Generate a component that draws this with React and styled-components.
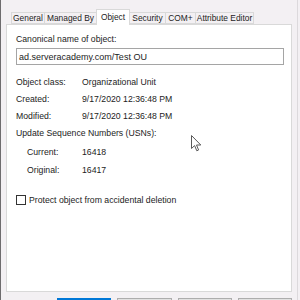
import * as React from "react";
import styled, { createGlobalStyle } from "styled-components";

const GlobalStyle = createGlobalStyle`
  html, body {
    margin: 0;
    padding: 0;
    width: 300px;
    height: 300px;
    overflow: hidden;
    background: #f3f0f3;
  }
  * { box-sizing: border-box; }
`;

const tabs = [
  { label: "General", width: 34 },
  { label: "Managed By", width: 53 },
  { label: "Object", width: 34, active: true },
  { label: "Security", width: 37 },
  { label: "COM+", width: 31 },
  { label: "Attribute Editor", width: 59 },
];

const rows = [
  { label: "Object class:", value: "Organizational Unit" },
  { label: "Created:", value: "9/17/2020 12:36:48 PM" },
  { label: "Modified:", value: "9/17/2020 12:36:48 PM" },
];

const usns = [
  { label: "Current:", value: "16418" },
  { label: "Original:", value: "16417" },
];

export default function App() {
  return (
    <>
      <GlobalStyle />
      <Window>
        <TabStrip>
          {tabs.map((t) => (
            <Tab key={t.label} $width={t.width} $active={t.active}>
              {t.label}
            </Tab>
          ))}
        </TabStrip>
        <Panel>
          <Label>Canonical name of object:</Label>
          <TextBox>ad.serveracademy.com/Test OU</TextBox>
          <Fields>
            {rows.map((r) => (
              <React.Fragment key={r.label}>
                <FieldLabel>{r.label}</FieldLabel>
                <FieldValue>{r.value}</FieldValue>
              </React.Fragment>
            ))}
            <Heading>Update Sequence Numbers (USNs):</Heading>
            {usns.map((r) => (
              <React.Fragment key={r.label}>
                <FieldLabel $indent>{r.label}</FieldLabel>
                <FieldValue $indent>{r.value}</FieldValue>
              </React.Fragment>
            ))}
          </Fields>
          <CheckRow>
            <CheckBox />
            <span>Protect object from accidental deletion</span>
          </CheckRow>
          <Cursor width="11" height="17" viewBox="0 0 11 17">
            <path
              d="M0.5 0.5 L0.5 13.5 L3.6 10.6 L5.8 15.8 L7.6 15 L5.5 10 L9.8 10 Z"
              fill="#ffffff"
              stroke="#5a5a5a"
              strokeWidth="1"
              strokeLinejoin="round"
            />
          </Cursor>
        </Panel>
        <ButtonRow>
          <Button $primary />
          <Button />
          <Button />
          <Button />
        </ButtonRow>
      </Window>
    </>
  );
}

const Window = styled.div`
  width: 298px;
  height: 300px;
  overflow: hidden;
  border-left: 1px solid #6e6c6e;
  border-right: 1px solid #dcd9dc;
  padding: 9px 5px 0 5px;
  display: flex;
  flex-direction: column;
  font-family: "Liberation Sans", Arial, sans-serif;
  font-size: 8.7px;
  color: #1c1c1c;
`;

const TabStrip = styled.div`
  display: flex;
  flex-shrink: 0;
  align-items: flex-end;
  height: 15px;
  padding-left: 5px;
  position: relative;
  z-index: 1;
`;

const Tab = styled.div`
  width: ${(p) => p.$width}px;
  height: ${(p) => (p.$active ? 16 : 12)}px;
  margin-bottom: ${(p) => (p.$active ? -1 : 0)}px;
  margin-left: -1px;
  border: 1px solid #d9d9d9;
  border-bottom: ${(p) => (p.$active ? "none" : "1px solid #d9d9d9")};
  background: ${(p) => (p.$active ? "#ffffff" : "#f3f0f3")};
  display: flex;
  align-items: center;
  justify-content: center;
  white-space: nowrap;
  font-size: 8.4px;
  padding-bottom: ${(p) => (p.$active ? 2 : 0)}px;
  &:first-child {
    margin-left: 0;
  }
`;

const Panel = styled.div`
  position: relative;
  flex-shrink: 0;
  height: 268px;
  background: #ffffff;
  border: 1px solid #d9d9d9;
  padding: 9px 0 0 9px;
`;

const Label = styled.div`
  line-height: 11px;
`;

const TextBox = styled.div`
  margin-top: 3px;
  width: 268px;
  height: 17px;
  border: 1px solid #a5a5a5;
  padding-left: 2px;
  display: flex;
  align-items: center;
  font-size: 9px;
`;

const Fields = styled.div`
  margin-top: 8px;
  display: grid;
  grid-template-columns: 66px 1fr;
  grid-auto-rows: 17.2px;
  align-items: center;
`;

const FieldLabel = styled.div`
  padding-left: ${(p) => (p.$indent ? 11 : 0)}px;
  transform: translateY(${(p) => (p.$indent ? 2 : 0)}px);
`;

const FieldValue = styled.div`
  transform: translateY(${(p) => (p.$indent ? 2 : 0)}px);
`;

const Heading = styled.div`
  grid-column: 1 / -1;
`;

const CheckRow = styled.div`
  margin-top: 19px;
  display: flex;
  align-items: center;
  gap: 3px;
`;

const CheckBox = styled.div`
  width: 10px;
  height: 10px;
  border: 1px solid #333333;
  background: #ffffff;
`;

const Cursor = styled.svg`
  position: absolute;
  left: 184px;
  top: 110px;
`;

const ButtonRow = styled.div`
  display: flex;
  flex-shrink: 0;
  gap: 6px;
  margin-top: 6px;
  padding-left: 51px;
`;

const Button = styled.div`
  width: 55px;
  height: 22px;
  background: ${(p) => (p.$primary ? "#e5f1fb" : "#e1e1e1")};
  border: ${(p) => (p.$primary ? "2px solid #0078d7" : "1px solid #adadad")};
`;
